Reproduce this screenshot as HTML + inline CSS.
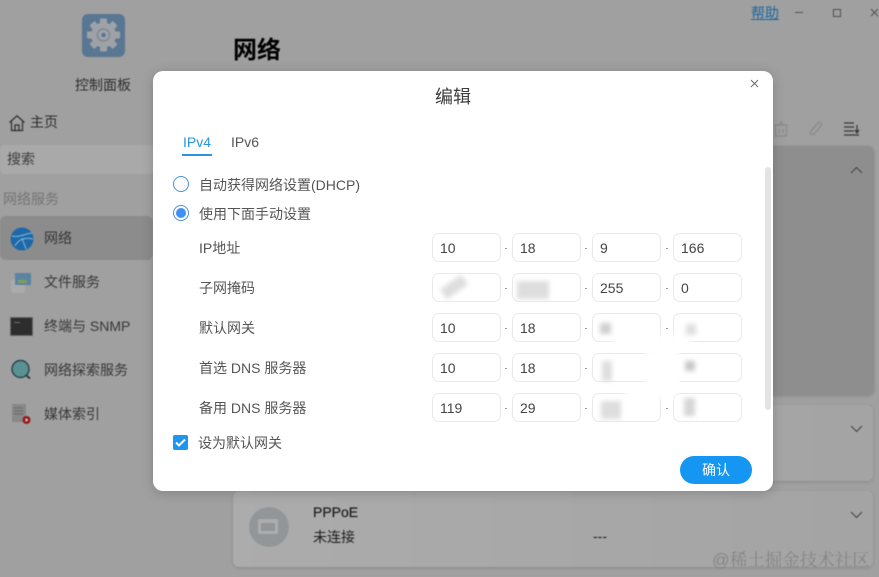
<!DOCTYPE html>
<html lang="zh">
<head>
<meta charset="utf-8">
<style>
html,body{margin:0;padding:0;}
body{width:879px;height:577px;overflow:hidden;position:relative;background:#a0a0a0;font-family:"Liberation Sans","Noto Sans CJK SC",sans-serif;color:#444;}
#bg{position:absolute;left:0;top:0;width:879px;height:577px;background:#a8a8a8;filter:blur(.4px) brightness(.95);}
.a{position:absolute;white-space:nowrap;}
.t{position:absolute;white-space:nowrap;font-size:14px;line-height:20px;}
.card{position:absolute;background:linear-gradient(90deg,#b5b5b5,#adadad);border-radius:6px;box-shadow:0 1px 3px rgba(0,0,0,.15);}
#modal{position:absolute;left:153px;top:71px;width:620px;height:420px;background:#fff;border-radius:10px;box-shadow:0 2px 12px rgba(0,0,0,.18);}
.lbl{position:absolute;left:199px;font-size:14px;line-height:20px;color:#555;white-space:nowrap;}
.inp{position:absolute;width:67px;height:27px;border:1px solid #e9e9e9;border-radius:7px;background:#fff;font-size:14px;line-height:28px;color:#444;text-indent:7px;}
.dot{position:absolute;width:2px;height:1px;background:#999;}
.blur{position:absolute;background:#dedede;filter:blur(2.500px);}
.wipe{position:absolute;background:#fff;filter:blur(3px);}
</style>
</head>
<body>
<div id="bg">
<!-- background -->
<div class="a" style="left:0;top:145px;width:153px;height:29px;background:#b2b2b2;border-radius:4px;"></div>
<div class="a" style="left:0;top:216px;width:153px;height:44px;background:#939393;border-radius:6px;"></div>

<!-- control panel icon -->
<div class="a" style="left:82px;top:14px;width:43px;height:43px;border-radius:6px;background:#5e7c9b;"></div>
<svg class="a" style="left:82px;top:14px" width="43" height="43" viewBox="0 0 43 43">
  <g fill="#a6abb0">
    <circle cx="21.500" cy="21" r="12.500"/>
    <rect x="18" y="4.500" width="7" height="33" rx="1"/>
    <rect x="18" y="4.500" width="7" height="33" rx="1" transform="rotate(45 21.500 21)"/>
    <rect x="18" y="4.500" width="7" height="33" rx="1" transform="rotate(90 21.500 21)"/>
    <rect x="18" y="4.500" width="7" height="33" rx="1" transform="rotate(135 21.500 21)"/>
  </g>
  <circle cx="21.500" cy="21" r="7" fill="#8d959d"/>
  <circle cx="21.500" cy="21" r="5" fill="#a9aeb3"/>
  <circle cx="21.500" cy="21" r="2.300" fill="#5e7c9b"/>
</svg>
<div class="t" style="left:75px;top:75px;color:#303030;font-size:14px;">控制面板</div>

<!-- home -->
<svg class="a" style="left:8px;top:114px" width="18" height="18" viewBox="0 0 18 18" fill="none" stroke="#303030" stroke-width="1.200">
  <path d="M1.500 8.500L9 1.800l7.500 6.700"/><path d="M3.500 7.500V16.500h11V7.500"/><path d="M7 16.500V11h4v5.500"/>
</svg>
<div class="t" style="left:30px;top:112px;color:#303030;">主页</div>
<div class="t" style="left:7px;top:149px;color:#404040;">搜索</div>
<div class="t" style="left:3px;top:189px;color:#7b7b7b;font-size:14px;">网络服务</div>

<!-- sidebar items -->
<svg class="a" style="left:10px;top:227px" width="24" height="24" viewBox="0 0 24 24">
  <circle cx="12" cy="12" r="11.500" fill="#1f6fb2"/>
  <path d="M2 9C8 11 14 7 22 6M5 19C8 13 14 10 23 12M12 11l4 11" stroke="#8fc1e2" stroke-width="1" fill="none"/>
</svg>
<div class="t" style="left:44px;top:228px;color:#3a3a3a;">网络</div>

<svg class="a" style="left:10px;top:272px" width="24" height="22" viewBox="0 0 24 22">
  <rect x="1" y="7" width="14" height="14" rx="3" fill="#b4b4b4"/>
  <rect x="5" y="1" width="16" height="12" fill="#5f8cab"/>
  <rect x="8" y="8" width="9" height="3" fill="#8ba35c"/>
</svg>
<div class="t" style="left:44px;top:272px;color:#3a3a3a;">文件服务</div>

<div class="a" style="left:10px;top:317px;width:21px;height:17px;background:#2f2f2f;border:1px solid #6a6a6a;"></div>
<div class="a" style="left:14px;top:322px;width:6px;height:1px;background:#777;"></div>
<div class="t" style="left:44px;top:316px;color:#3a3a3a;">终端与 SNMP</div>

<svg class="a" style="left:10px;top:359px" width="22" height="22" viewBox="0 0 22 22">
  <circle cx="10.500" cy="10" r="8.500" fill="#5e9a9c" stroke="#2f4a50" stroke-width="1.500"/>
  <path d="M16 16l4 3.500" stroke="#2f3f45" stroke-width="2"/>
</svg>
<div class="t" style="left:44px;top:360px;color:#3a3a3a;">网络探索服务</div>

<svg class="a" style="left:11px;top:403px" width="22" height="22" viewBox="0 0 22 22">
  <rect x="1" y="1" width="14" height="18" fill="#8f8f8f"/>
  <path d="M3 5h9M3 8h9M3 11h9" stroke="#6e6e6e"/>
  <circle cx="15.500" cy="17" r="4" fill="#a11b1b"/>
  <path d="M14.500 15v4l3-2z" fill="#ddd"/>
</svg>
<div class="t" style="left:44px;top:404px;color:#3a3a3a;">媒体索引</div>

<!-- header -->
<div class="a" style="left:233px;top:36px;font-size:24px;line-height:30px;font-weight:bold;color:#000;">网络</div>
<div class="a" style="left:751px;top:4px;font-size:14px;line-height:18px;color:#1f6ca8;text-decoration:underline;">帮助</div>
<div class="a" style="left:795px;top:12px;width:8px;height:1px;background:#555;"></div>
<div class="a" style="left:833px;top:9px;width:6px;height:6px;border:1px solid #555;"></div>
<svg class="a" style="left:870px;top:8px" width="9" height="9" viewBox="0 0 9 9" stroke="#555" fill="none"><path d="M1 1l7 7M8 1L1 8"/></svg>

<!-- toolbar -->
<svg class="a" style="left:774px;top:120px" width="14" height="18" viewBox="0 0 14 18" fill="none" stroke="#949494" stroke-width="1.300">
  <path d="M0 5h14M5 5l2-3 2 3"/><rect x="1.500" y="5" width="11" height="11"/><path d="M5 9v4M9 9v4"/>
</svg>
<svg class="a" style="left:808px;top:120px" width="17" height="17" viewBox="0 0 17 17" fill="none" stroke="#949494" stroke-width="1.400">
  <path d="M5 9l5-6c2-2 5 1 3 3l-7 8c-2 2-5-1-3-3l5-6"/>
</svg>
<svg class="a" style="left:844px;top:122px" width="16" height="14" viewBox="0 0 16 14" fill="none" stroke="#3c3c3c" stroke-width="1.200">
  <path d="M0 1h10M0 5h10M0 9h10M0 13h15M13 3v8"/><path d="M11 8l2 3 2-3" fill="#3c3c3c"/>
</svg>

<!-- cards -->
<div class="card" style="left:233px;top:146px;width:641px;height:249px;background:#959595;"></div>
<svg class="a" style="left:850px;top:166px" width="13" height="8" viewBox="0 0 13 8" fill="none" stroke="#444" stroke-width="1"><path d="M1 7l5.500-5.500L12 7"/></svg>
<div class="card" style="left:233px;top:405px;width:640px;height:76px;"></div>
<svg class="a" style="left:850px;top:425px" width="13" height="8" viewBox="0 0 13 8" fill="none" stroke="#444" stroke-width="1"><path d="M1 1l5.500 5.500L12 1"/></svg>
<div class="card" style="left:233px;top:491px;width:640px;height:76px;"></div>
<svg class="a" style="left:850px;top:511px" width="13" height="8" viewBox="0 0 13 8" fill="none" stroke="#444" stroke-width="1"><path d="M1 1l5.500 5.500L12 1"/></svg>
<div class="a" style="left:249px;top:507px;width:40px;height:40px;border-radius:50%;background:#9b9ea1;"></div>
<div class="a" style="left:258px;top:519px;width:20px;height:15px;background:#b6b6b6;border-radius:2px;"></div>
<div class="a" style="left:261px;top:523px;width:14px;height:8px;background:#9b9ea1;"></div>
<div class="t" style="left:313px;top:502px;font-size:14px;color:#1e1e1e;-webkit-text-stroke:.2px #1e1e1e;">PPPoE</div>
<div class="t" style="left:313px;top:527px;color:#1e1e1e;">未连接</div>
<div class="t" style="left:593px;top:526px;color:#1e1e1e;">---</div>

<!-- watermark -->
<div class="a" style="left:712px;top:548px;font-size:17.500px;line-height:24px;color:#8c8c8c;font-family:'Liberation Sans','Noto Serif CJK SC',serif;">@稀土掘金技术社区</div>
</div>

<!-- modal -->
<div id="modal"></div>
<div class="a" style="left:435px;top:84px;font-size:18px;line-height:26px;color:#3c3c3c;">编辑</div>
<svg class="a" style="left:750px;top:79px" width="9" height="9" viewBox="0 0 9 9" stroke="#666" fill="none" stroke-width=".9"><path d="M1 1l7 7M8 1L1 8"/></svg>

<div class="t" style="left:183px;top:132px;color:#2a95dc;">IPv4</div>
<div class="t" style="left:231px;top:132px;color:#555;">IPv6</div>
<div class="a" style="left:182px;top:154px;width:30px;height:2px;background:#2a95dc;"></div>

<div class="a" style="left:173px;top:176px;width:14px;height:14px;border:1px solid #4a90d9;border-radius:50%;"></div>
<div class="lbl" style="top:175px;">自动获得网络设置(DHCP)</div>
<div class="a" style="left:173px;top:205px;width:14px;height:14px;border:1px solid #4a90d9;border-radius:50%;"></div>
<div class="a" style="left:176px;top:208px;width:10px;height:10px;background:#3f8ff5;border-radius:50%;"></div>
<div class="lbl" style="top:204px;">使用下面手动设置</div>

<div class="lbl" style="top:238px;">IP地址</div>
<div class="lbl" style="top:278px;">子网掩码</div>
<div class="lbl" style="top:318px;">默认网关</div>
<div class="lbl" style="top:358px;">首选 DNS 服务器</div>
<div class="lbl" style="top:398px;">备用 DNS 服务器</div>

<!-- row 1 -->
<div class="inp" style="left:432px;top:233px;">10</div><div class="dot" style="left:505px;top:248px;"></div>
<div class="inp" style="left:512px;top:233px;">18</div><div class="dot" style="left:585px;top:248px;"></div>
<div class="inp" style="left:592px;top:233px;">9</div><div class="dot" style="left:666px;top:248px;"></div>
<div class="inp" style="left:673px;top:233px;">166</div>
<!-- row 2 -->
<div class="inp" style="left:432px;top:273px;"></div><div class="dot" style="left:505px;top:288px;"></div>
<div class="inp" style="left:512px;top:273px;"></div><div class="dot" style="left:585px;top:288px;"></div>
<div class="inp" style="left:592px;top:273px;">255</div><div class="dot" style="left:666px;top:288px;"></div>
<div class="inp" style="left:673px;top:273px;">0</div>
<!-- row 3 -->
<div class="inp" style="left:432px;top:313px;">10</div><div class="dot" style="left:505px;top:328px;"></div>
<div class="inp" style="left:512px;top:313px;">18</div><div class="dot" style="left:585px;top:328px;"></div>
<div class="inp" style="left:592px;top:313px;"></div><div class="dot" style="left:666px;top:328px;"></div>
<div class="inp" style="left:673px;top:313px;"></div>
<!-- row 4 -->
<div class="inp" style="left:432px;top:353px;">10</div><div class="dot" style="left:505px;top:368px;"></div>
<div class="inp" style="left:512px;top:353px;">18</div><div class="dot" style="left:585px;top:368px;"></div>
<div class="inp" style="left:592px;top:353px;"></div><div class="dot" style="left:666px;top:368px;"></div>
<div class="inp" style="left:673px;top:353px;"></div>
<!-- row 5 -->
<div class="inp" style="left:432px;top:393px;">119</div><div class="dot" style="left:505px;top:408px;"></div>
<div class="inp" style="left:512px;top:393px;">29</div><div class="dot" style="left:585px;top:408px;"></div>
<div class="inp" style="left:592px;top:393px;"></div><div class="dot" style="left:666px;top:408px;"></div>
<div class="inp" style="left:673px;top:393px;"></div>

<!-- redaction smudges -->
<div class="wipe" style="left:612px;top:336px;width:80px;height:12px;"></div>
<div class="wipe" style="left:645px;top:350px;width:35px;height:40px;"></div>
<div class="wipe" style="left:625px;top:388px;width:50px;height:10px;"></div>
<div class="blur" style="left:441px;top:281px;width:26px;height:12px;transform:rotate(-35deg);"></div>
<div class="blur" style="left:517px;top:281px;width:32px;height:18px;"></div>
<div class="blur" style="left:600px;top:323px;width:11px;height:11px;background:#d0d0d0;"></div>
<div class="blur" style="left:686px;top:324px;width:10px;height:11px;"></div>
<div class="blur" style="left:602px;top:361px;width:10px;height:20px;"></div>
<div class="blur" style="left:685px;top:361px;width:10px;height:10px;background:#c8c8c8;"></div>
<div class="blur" style="left:601px;top:401px;width:20px;height:18px;"></div>
<div class="blur" style="left:684px;top:398px;width:11px;height:18px;background:#d6d6d6;"></div>

<!-- scrollbar -->
<div class="a" style="left:765px;top:167px;width:6px;height:243px;background:#e3e3e3;border-radius:3px;"></div>

<!-- checkbox -->
<div class="a" style="left:173px;top:435px;width:15px;height:15px;background:#1e96f0;border-radius:2px;"></div>
<svg class="a" style="left:173px;top:435px" width="15" height="15" viewBox="0 0 15 15" fill="none" stroke="#fff" stroke-width="2"><path d="M3 7.500l3 3 6-6"/></svg>
<div class="lbl" style="left:198px;top:433px;">设为默认网关</div>

<!-- confirm -->
<div class="a" style="left:680px;top:456px;width:72px;height:28px;background:#1596f3;border-radius:14px;color:#fff;font-size:14px;line-height:28px;text-align:center;">确认</div>
</body>
</html>
